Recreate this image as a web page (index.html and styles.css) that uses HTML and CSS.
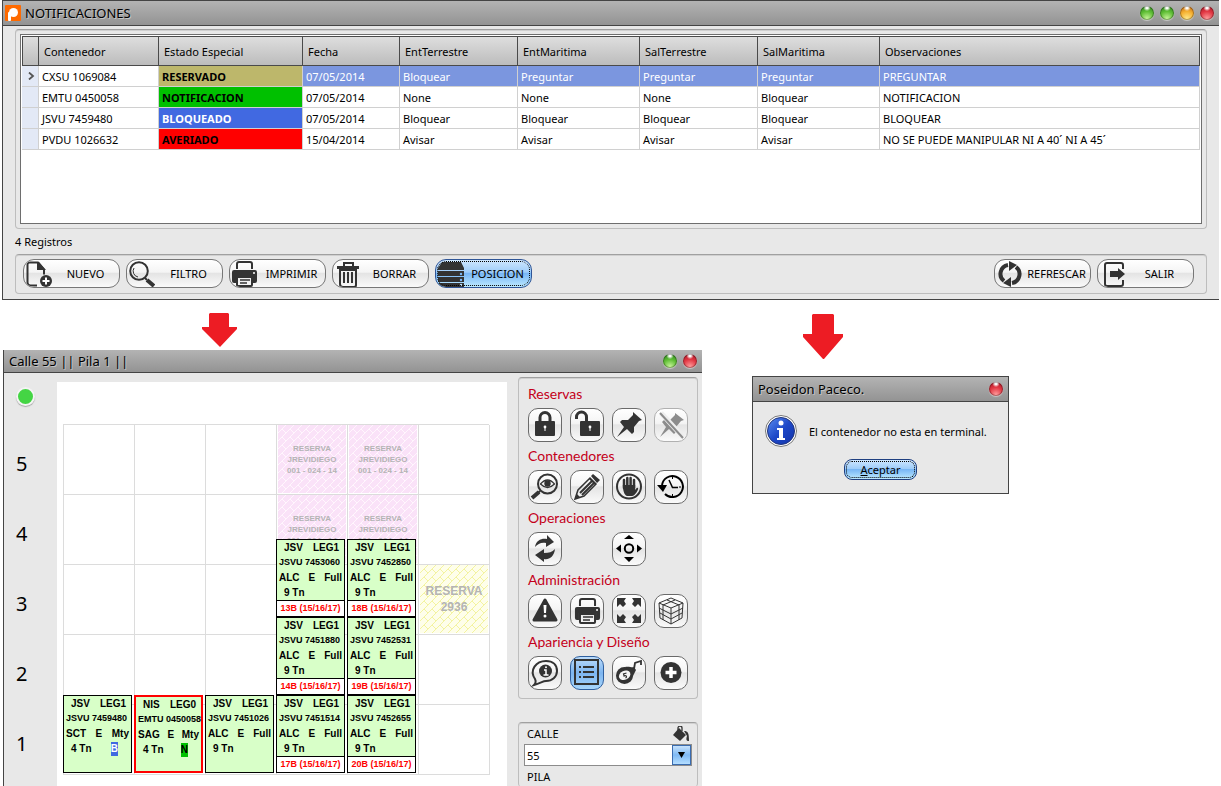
FILE: index.html
```
<!DOCTYPE html>
<html lang="es">
<head>
    <meta charset="UTF-8">
    <meta name="viewport" content="width=device-width, initial-scale=1.0">
    <title>Notificaciones</title>
    <link rel="stylesheet" href="styles.css">
</head>
<body>
    <!-- Icon set -->
    <svg class="hidden" aria-hidden="true">
        <symbol id="i-new" viewBox="0 0 28 28">
            <path d="M13 25.500H6.500a3 3 0 0 1-3-3v-18a2 2 0 0 1 2-2H14l6 7v5" fill="none" stroke="currentColor" stroke-width="2"/>
            <path d="M13 2h2l7 8h-9z"/>
            <circle cx="22" cy="21" r="6"/>
            <path d="M22 17.500v7M18.500 21h7" stroke="#fff" stroke-width="2"/>
        </symbol>
        <symbol id="i-search" viewBox="0 0 28 28">
            <circle cx="12" cy="11" r="8.800" fill="none" stroke="currentColor" stroke-width="2"/>
            <path d="M7 8a6 6 0 0 0 4 9" fill="none" stroke="currentColor" stroke-width="1"/>
            <path d="M18 18l2 2" stroke="currentColor" stroke-width="2"/>
            <path d="M20 20l7 6" stroke="currentColor" stroke-width="4"/>
        </symbol>
        <symbol id="i-print" viewBox="0 0 28 28">
            <path d="M7 9V4a2 2 0 0 1 2-2h11a2 2 0 0 1 2 2v5" fill="none" stroke="currentColor" stroke-width="2"/>
            <path d="M4 10h21a2 2 0 0 1 2 2v9a2 2 0 0 1-2 2h-2v-7H6v7H4a2 2 0 0 1-2-2v-9a2 2 0 0 1 2-2z"/>
            <path d="M7 17h15v8a1 1 0 0 1-1 1H8a1 1 0 0 1-1-1z" fill="none" stroke="currentColor" stroke-width="2"/>
            <path d="M10 20h10M10 23h7" stroke="currentColor" stroke-width="1.500"/>
            <circle cx="24" cy="13" r="1" fill="#fff"/>
        </symbol>
        <symbol id="i-trash" viewBox="0 0 28 28">
            <path d="M11 6V3h9v3" fill="none" stroke="currentColor" stroke-width="2"/>
            <path d="M4 6h22v3H4z"/>
            <path d="M7 10v14a3 3 0 0 0 3 3h11a2 2 0 0 0 2-2V10z" fill="none" stroke="currentColor" stroke-width="2"/>
            <path d="M11 12v11M15 12v11M19 12v11" stroke="currentColor" stroke-width="2"/>
        </symbol>
        <symbol id="i-stack" viewBox="0 0 28 28">
            <path d="M6 2h19l3 6v2H2V8zM2 11h26v5H2zM2 17h26v5H2zM2 23h26v4H4z"/>
            <circle cx="25" cy="14" r="1.200" fill="#7db8f5"/>
            <circle cx="25" cy="20" r="1.200" fill="#7db8f5"/>
            <circle cx="25" cy="25" r="1.200" fill="#bfe4ff"/>
        </symbol>
        <symbol id="i-refresh" viewBox="0 0 28 28">
            <path d="M9 21a9 9 0 0 1 4-16M21 7a9 9 0 0 1-4 16" fill="none" stroke="currentColor" stroke-width="4"/>
            <path d="M14 1l8 4-8 6zM16 27l-8-4 8-6z"/>
        </symbol>
        <symbol id="i-exit" viewBox="0 0 28 28">
            <path d="M25 9V5a2 2 0 0 0-2-2H9a2 2 0 0 0-2 2v19a2 2 0 0 0 2 2h14a2 2 0 0 0 2-2v-4" fill="none" stroke="currentColor" stroke-width="2"/>
            <path d="M12 11h8V8l7 6-7 6v-3h-8z"/>
        </symbol>

        <symbol id="i-lock" viewBox="0 0 32 32">
            <path d="M11 14V8.500a5 5 0 0 1 10 0V14" fill="none" stroke="currentColor" stroke-width="3"/>
            <rect x="6" y="12" width="20" height="15" rx="1"/>
            <circle cx="16" cy="18" r="1.400" fill="#fff"/>
            <path d="M16 18v4" stroke="#fff"/>
        </symbol>
        <symbol id="i-unlock" viewBox="0 0 32 32">
            <path d="M5.500 10V8a5 5 0 0 1 10 0v5" fill="none" stroke="currentColor" stroke-width="3"/>
            <rect x="9" y="12" width="20" height="15" rx="1"/>
            <circle cx="19" cy="18" r="1.400" fill="#fff"/>
            <path d="M19 18v4" stroke="#fff"/>
        </symbol>
        <symbol id="i-pin" viewBox="0 0 32 32">
            <path d="M20 3l9 8-3 1-5 6v5l-2 2-5-5L4 28l7-10-4-5 2-2h6l5-5z"/>
        </symbol>
        <symbol id="i-unpin" viewBox="0 0 32 32">
            <path d="M20 4l9 7-3 1-5 6v5l-2 2-5-5L5 28l6-10-4-5 2-2h6l5-5z"/>
            <path d="M6 4l22 24" stroke="#eee" stroke-width="5"/>
            <path d="M5 4l23 25" stroke="currentColor" stroke-width="2"/>
        </symbol>
        <symbol id="i-view" viewBox="0 0 32 32">
            <circle cx="18.500" cy="13" r="9.500" fill="none" stroke="currentColor" stroke-width="2"/>
            <path d="M11 20l-2 2" stroke="currentColor" stroke-width="2"/>
            <path d="M10 21l-7 6" stroke="currentColor" stroke-width="4"/>
            <path d="M11.500 13q7-8 14 0-7 7-14 0z" fill="none" stroke="currentColor" stroke-width="1.300"/>
            <circle cx="18.500" cy="12.500" r="3.200"/>
        </symbol>
        <symbol id="i-pencil" viewBox="0 0 32 32">
            <path d="M4 28l3-9L19 7l6 6-12 12z" fill="none" stroke="currentColor" stroke-width="1.500"/>
            <path d="M9 22L21 10M11 24L23 12" stroke="currentColor" stroke-width="2"/>
            <path d="M4 28l2-5 3 3zM20 5l2-2 7 6-3 3zM18 8l1-1 6 6-1 1z"/>
        </symbol>
        <symbol id="i-hand" viewBox="0 0 32 32">
            <circle cx="16" cy="15.500" r="12" fill="none" stroke="currentColor" stroke-width="2"/>
            <path d="M11 9v8M14.300 7v9M17.600 7v9M21 9v8" stroke="currentColor" stroke-width="2.500" stroke-linecap="round"/>
            <path d="M9.800 14h12.400l-.2 5c1-1 2-3 3-2s-3 8-6 8h-5c-3-1-4-6-4.200-11z"/>
        </symbol>
        <symbol id="i-history" viewBox="0 0 32 32">
            <path d="M7 14a10.500 10.500 0 1 1 3 9" fill="none" stroke="#000" stroke-width="2"/>
            <path d="M2 14h10l-4 7z" fill="#000"/>
            <path d="M14 9l3.500 7.500H23" fill="none" stroke="#000" stroke-width="1.500"/>
            <path d="M17.500 6v2M26 16h-2M17.500 25v-2" stroke="#000"/>
        </symbol>
        <symbol id="i-swap" viewBox="0 0 32 32">
            <path d="M6 14c1-7 7-9 12-8V2l7 7-8 5v-4c-5-1-8 1-11 4z"/>
            <path d="M26 16c-1 8-6 11-11 10v3l-9-7 9-6v4c5 0 8-1 11-4z"/>
        </symbol>
        <symbol id="i-move" viewBox="0 0 32 32">
            <circle cx="16" cy="15.500" r="4.200" fill="none" stroke="#000" stroke-width="2"/>
            <path d="M16 2l5 4H11zM16 29l5-5H11zM3 15.500l5-4v8zM29 15.500l-5-4v8z" fill="#000"/>
        </symbol>
        <symbol id="i-warn" viewBox="0 0 32 32">
            <path d="M16 5l11 20H5z" stroke="currentColor" stroke-width="3" stroke-linejoin="round"/>
            <path d="M14.500 10h3l-.5 8h-2z" fill="#fff"/>
            <circle cx="16" cy="21" r="1.500" fill="#fff"/>
        </symbol>
        <symbol id="i-expand" viewBox="0 0 32 32">
            <path d="M4 3h9l-2 3 2 3-3 3-3-3-3 3zM28 3v9l-3-3-3 3-3-3 2-3-2-3zM4 28v-9l3 3 3-3 3 3-2 3 2 3zM28 28h-9l2-3-2-3 3-3 3 3 3-3z"/>
        </symbol>
        <symbol id="i-cube" viewBox="0 0 32 32">
            <path d="M16 3l12 5-1 15-11 6-11-6L4 8zM4 8l12 5 12-5M16 13v16M12 5l12 5v15M20 5L8 10v15M4 13l12 6 12-6M5 18l11 6 11-6" fill="none" stroke="currentColor" stroke-width="1"/>
        </symbol>
        <symbol id="i-info" viewBox="0 0 32 32">
            <path d="M6 22C0 13 7 4 17 4c7 0 11 4 11 10s-5 10-11 10c-3 0-5 2-12 4 2-2 2-4 1-6z" fill="none" stroke="currentColor" stroke-width="2"/>
            <circle cx="16.500" cy="14" r="6.500"/>
            <path d="M15 13h2v5M14.500 18h5" stroke="#fff" fill="none" stroke-width="1.500"/>
            <circle cx="17" cy="10.300" r="1" fill="#fff"/>
        </symbol>
        <symbol id="i-list" viewBox="0 0 32 32">
            <rect x="4" y="3" width="23" height="24" fill="none" stroke="currentColor" stroke-width="2"/>
            <path d="M8 10h2M8 15h2M8 20h2M12 10h11M12 15h11M12 20h11" stroke="currentColor" stroke-width="2"/>
        </symbol>
        <symbol id="i-tape" viewBox="0 0 32 32">
            <circle cx="11.500" cy="18.500" r="8.500"/>
            <path d="M12 10c4-1 7 1 9 0l2 3-4 8z"/>
            <path d="M21 12l1-6 6-2v4" fill="none" stroke="currentColor" stroke-width="1.800"/>
            <ellipse cx="11.500" cy="18.500" rx="6" ry="4.500" fill="#f4f4f4" transform="rotate(-25 11 18)"/>
            <path d="M13.500 16l-3 1 .6 2c2-1.200 3.500.6 1.400 2" fill="none" stroke="currentColor" stroke-width="1.200"/>
        </symbol>
        <symbol id="i-add" viewBox="0 0 32 32">
            <circle cx="16" cy="15.500" r="10.500"/>
            <path d="M16 10v11M10.500 15.500h11" stroke="#fff" stroke-width="3.500"/>
        </symbol>
        <symbol id="i-bucket" viewBox="0 0 16 16">
            <path d="M6 2l7 7-6 6L0 9z"/>
            <path d="M5 8V2a2 2 0 0 1 4 0v3" fill="none" stroke="currentColor" stroke-width="1.300"/>
            <path d="M11 5c4 0 5 2 5 10-3 0-3-2-2-5z"/>
        </symbol>
    </svg>

    <section class="window main-window">
        <header class="titlebar">
            <svg class="app-icon" viewBox="0 0 16 16" aria-hidden="true">
                <rect width="16" height="16" rx="1" fill="#ff6a00"/>
                <circle cx="8.500" cy="7.500" r="4.500" fill="#fff"/>
                <rect x="3" y="7" width="3" height="9" rx="1" fill="#fff"/>
            </svg>
            <h1>NOTIFICACIONES</h1>
            <div class="orbs">
                <button class="orb orb-green" aria-label="Minimizar"></button>
                <button class="orb orb-green" aria-label="Restaurar"></button>
                <button class="orb orb-orange" aria-label="Maximizar"></button>
                <button class="orb orb-red" aria-label="Cerrar"></button>
            </div>
        </header>
        <div class="main-body">
            <div class="group">
                <div class="grid-box">
                    <table class="data-grid">
                        <colgroup>
                            <col class="c-mark"><col class="c-120"><col class="c-144"><col class="c-97"><col class="c-118"><col class="c-122"><col class="c-118"><col class="c-122"><col>
                        </colgroup>
                        <thead>
                            <tr>
                                <th></th>
                                <th>Contenedor</th>
                                <th>Estado Especial</th>
                                <th>Fecha</th>
                                <th>EntTerrestre</th>
                                <th>EntMaritima</th>
                                <th>SalTerrestre</th>
                                <th>SalMaritima</th>
                                <th>Observaciones</th>
                            </tr>
                        </thead>
                        <tbody>
                            <tr class="selected">
                                <td class="mark"><svg viewBox="0 0 8 8" aria-hidden="true"><path d="M2 0.500l4 3.500-4 3.500" fill="none" stroke="#555" stroke-width="1.800"/></svg></td>
                                <td class="plain">CXSU 1069084</td>
                                <td class="state reserved">RESERVADO</td>
                                <td>07/05/2014</td>
                                <td>Bloquear</td>
                                <td>Preguntar</td>
                                <td>Preguntar</td>
                                <td>Preguntar</td>
                                <td>PREGUNTAR</td>
                            </tr>
                            <tr>
                                <td class="mark"></td>
                                <td>EMTU 0450058</td>
                                <td class="state notified">NOTIFICACION</td>
                                <td>07/05/2014</td>
                                <td>None</td>
                                <td>None</td>
                                <td>None</td>
                                <td>Bloquear</td>
                                <td>NOTIFICACION</td>
                            </tr>
                            <tr>
                                <td class="mark"></td>
                                <td>JSVU 7459480</td>
                                <td class="state blocked">BLOQUEADO</td>
                                <td>07/05/2014</td>
                                <td>Bloquear</td>
                                <td>Bloquear</td>
                                <td>Bloquear</td>
                                <td>Bloquear</td>
                                <td>BLOQUEAR</td>
                            </tr>
                            <tr>
                                <td class="mark"></td>
                                <td>PVDU 1026632</td>
                                <td class="state damaged">AVERIADO</td>
                                <td>15/04/2014</td>
                                <td>Avisar</td>
                                <td>Avisar</td>
                                <td>Avisar</td>
                                <td>Avisar</td>
                                <td>NO SE PUEDE MANIPULAR NI A 40´ NI A 45´</td>
                            </tr>
                        </tbody>
                    </table>
                </div>
            </div>
            <p class="count">4 Registros</p>
            <div class="group toolbar">
                <button class="btn"><svg><use href="#i-new"/></svg><span>NUEVO</span></button>
                <button class="btn"><svg><use href="#i-search"/></svg><span>FILTRO</span></button>
                <button class="btn"><svg><use href="#i-print"/></svg><span>IMPRIMIR</span></button>
                <button class="btn"><svg><use href="#i-trash"/></svg><span>BORRAR</span></button>
                <button class="btn btn-active"><svg><use href="#i-stack"/></svg><span>POSICION</span></button>
                <button class="btn push-right"><svg><use href="#i-refresh"/></svg><span>REFRESCAR</span></button>
                <button class="btn"><svg><use href="#i-exit"/></svg><span>SALIR</span></button>
            </div>
        </div>
    </section>

    <div class="results">
        <div class="result-left">
            <svg class="arrow arrow-left" viewBox="0 0 35 34" aria-hidden="true"><path d="M8 0h18l1 1v13h8v2L18 34 0 16v-2h7V1z"/></svg>
            <section class="window stack-window">
                <header class="titlebar titlebar-plain">
                    <h2>Calle 55 || Pila 1 ||</h2>
                    <div class="orbs">
                        <button class="orb orb-green" aria-label="Minimizar"></button>
                        <button class="orb orb-red" aria-label="Cerrar"></button>
                    </div>
                </header>
                <div class="stack-body">
                    <div class="levels">
                        <span class="led"></span>
                        <ol>
                            <li>5</li>
                            <li>4</li>
                            <li>3</li>
                            <li>2</li>
                            <li>1</li>
                        </ol>
                    </div>

                    <div class="yard">
                        <div class="bay">
                            <div class="slots">
                                <div></div><div></div><div></div>
                                <div class="hold hold-pink">RESERVA<br>JREVIDIEGO<br>001 - 024 - 14</div>
                                <div class="hold hold-pink">RESERVA<br>JREVIDIEGO<br>001 - 024 - 14</div>
                                <div></div>
                                <div></div><div></div><div></div>
                                <div class="hold hold-pink">RESERVA<br>JREVIDIEGO<br>001 - 024 - 14</div>
                                <div class="hold hold-pink">RESERVA<br>JREVIDIEGO<br>001 - 024 - 14</div>
                                <div></div>
                                <div></div><div></div><div></div><div></div><div></div>
                                <div class="hold hold-yellow">RESERVA<br>2936</div>
                                <div></div><div></div><div></div><div></div><div></div><div></div>
                                <div></div><div></div><div></div><div></div><div></div><div></div>
                            </div>
                            <div class="piles">
                                <div class="pile">
                                    <article class="box">
                                        <p class="box-head"><span>JSV</span><span>LEG1</span></p>
                                        <p class="box-id">JSVU 7459480</p>
                                        <p class="box-info"><span>SCT</span><span>E</span><span>Mty</span></p>
                                        <p class="box-load"><span>4 Tn</span><mark class="tag-b">B</mark></p>
                                    </article>
                                </div>
                                <div class="pile">
                                    <article class="box box-selected">
                                        <p class="box-head"><span>NIS</span><span>LEG0</span></p>
                                        <p class="box-id">EMTU 0450058</p>
                                        <p class="box-info"><span>SAG</span><span>E</span><span>Mty</span></p>
                                        <p class="box-load"><span>4 Tn</span><mark class="tag-n">N</mark></p>
                                    </article>
                                </div>
                                <div class="pile">
                                    <article class="box">
                                        <p class="box-head"><span>JSV</span><span>LEG1</span></p>
                                        <p class="box-id">JSVU 7451026</p>
                                        <p class="box-info"><span>ALC</span><span>E</span><span>Full</span></p>
                                        <p class="box-load"><span>9 Tn</span></p>
                                    </article>
                                </div>
                                <div class="pile">
                                    <article class="box">
                                        <p class="box-head"><span>JSV</span><span>LEG1</span></p>
                                        <p class="box-id">JSVU 7453060</p>
                                        <p class="box-info"><span>ALC</span><span>E</span><span>Full</span></p>
                                        <p class="box-load"><span>9 Tn</span></p>
                                        <p class="box-foot">13B (15/16/17)</p>
                                    </article>
                                    <article class="box">
                                        <p class="box-head"><span>JSV</span><span>LEG1</span></p>
                                        <p class="box-id">JSVU 7451880</p>
                                        <p class="box-info"><span>ALC</span><span>E</span><span>Full</span></p>
                                        <p class="box-load"><span>9 Tn</span></p>
                                        <p class="box-foot">14B (15/16/17)</p>
                                    </article>
                                    <article class="box">
                                        <p class="box-head"><span>JSV</span><span>LEG1</span></p>
                                        <p class="box-id">JSVU 7451514</p>
                                        <p class="box-info"><span>ALC</span><span>E</span><span>Full</span></p>
                                        <p class="box-load"><span>9 Tn</span></p>
                                        <p class="box-foot">17B (15/16/17)</p>
                                    </article>
                                </div>
                                <div class="pile">
                                    <article class="box">
                                        <p class="box-head"><span>JSV</span><span>LEG1</span></p>
                                        <p class="box-id">JSVU 7452850</p>
                                        <p class="box-info"><span>ALC</span><span>E</span><span>Full</span></p>
                                        <p class="box-load"><span>9 Tn</span></p>
                                        <p class="box-foot">18B (15/16/17)</p>
                                    </article>
                                    <article class="box">
                                        <p class="box-head"><span>JSV</span><span>LEG1</span></p>
                                        <p class="box-id">JSVU 7452531</p>
                                        <p class="box-info"><span>ALC</span><span>E</span><span>Full</span></p>
                                        <p class="box-load"><span>9 Tn</span></p>
                                        <p class="box-foot">19B (15/16/17)</p>
                                    </article>
                                    <article class="box">
                                        <p class="box-head"><span>JSV</span><span>LEG1</span></p>
                                        <p class="box-id">JSVU 7452655</p>
                                        <p class="box-info"><span>ALC</span><span>E</span><span>Full</span></p>
                                        <p class="box-load"><span>9 Tn</span></p>
                                        <p class="box-foot">20B (15/16/17)</p>
                                    </article>
                                </div>
                            </div>
                        </div>
                    </div>

                    <aside class="side">
                        <div class="group tools">
                            <h3>Reservas</h3>
                            <div class="tool-row">
                                <button class="tool" aria-label="Reservar"><svg><use href="#i-lock"/></svg></button>
                                <button class="tool" aria-label="Liberar"><svg><use href="#i-unlock"/></svg></button>
                                <button class="tool" aria-label="Fijar"><svg><use href="#i-pin"/></svg></button>
                                <button class="tool" aria-label="Soltar" disabled><svg><use href="#i-unpin"/></svg></button>
                            </div>
                            <h3>Contenedores</h3>
                            <div class="tool-row">
                                <button class="tool" aria-label="Ver"><svg><use href="#i-view"/></svg></button>
                                <button class="tool" aria-label="Editar"><svg><use href="#i-pencil"/></svg></button>
                                <button class="tool" aria-label="Bloquear"><svg><use href="#i-hand"/></svg></button>
                                <button class="tool" aria-label="Historial"><svg><use href="#i-history"/></svg></button>
                            </div>
                            <h3>Operaciones</h3>
                            <div class="tool-row">
                                <button class="tool" aria-label="Intercambiar"><svg><use href="#i-swap"/></svg></button>
                                <span></span>
                                <button class="tool" aria-label="Mover"><svg><use href="#i-move"/></svg></button>
                            </div>
                            <h3>Administración</h3>
                            <div class="tool-row">
                                <button class="tool" aria-label="Avisos"><svg><use href="#i-warn"/></svg></button>
                                <button class="tool" aria-label="Imprimir"><svg viewBox="-2 -2 33 33"><use href="#i-print" width="29" height="29"/></svg></button>
                                <button class="tool" aria-label="Ampliar"><svg><use href="#i-expand"/></svg></button>
                                <button class="tool" aria-label="Vista 3D"><svg><use href="#i-cube"/></svg></button>
                            </div>
                            <h3>Apariencia y Diseño</h3>
                            <div class="tool-row">
                                <button class="tool" aria-label="Información"><svg><use href="#i-info"/></svg></button>
                                <button class="tool tool-active" aria-label="Lista"><svg><use href="#i-list"/></svg></button>
                                <button class="tool" aria-label="Medir"><svg><use href="#i-tape"/></svg></button>
                                <button class="tool" aria-label="Agregar"><svg><use href="#i-add"/></svg></button>
                            </div>
                        </div>
                        <div class="group place">
                            <div class="place-head">
                                <label for="calle">CALLE</label>
                                <svg><use href="#i-bucket"/></svg>
                            </div>
                            <div class="combo">
                                <select id="calle"><option>55</option></select>
                                <span class="combo-arrow"><svg viewBox="0 0 7 6" aria-hidden="true"><path d="M0 0h7L3.500 6z"/></svg></span>
                            </div>
                            <div class="place-head">PILA</div>
                        </div>
                    </aside>
                </div>
            </section>
        </div>

        <div class="result-right">
            <svg class="arrow arrow-right" viewBox="0 0 40 45" aria-hidden="true"><path d="M10 0h20l1 1v19h9v3L21 45h-1L0 23v-3h9V1z"/></svg>
            <section class="window dialog" role="dialog" aria-labelledby="dialog-title">
                <header class="titlebar">
                    <h2 id="dialog-title">Poseidon Paceco.</h2>
                    <div class="orbs"><button class="orb orb-red" aria-label="Cerrar"></button></div>
                </header>
                <div class="message">
                    <svg viewBox="0 0 32 32" aria-hidden="true">
                        <defs>
                            <linearGradient id="blue" x1="0" y1="0" x2="1" y2="1">
                                <stop offset="0" stop-color="#5a8cf0"/>
                                <stop offset="0.500" stop-color="#1d48c8"/>
                                <stop offset="1" stop-color="#1232a8"/>
                            </linearGradient>
                        </defs>
                        <circle cx="16" cy="16" r="15.500" fill="#fff" stroke="#777"/>
                        <circle cx="16" cy="16" r="13.500" fill="url(#blue)" stroke="#22357c"/>
                        <circle cx="16" cy="8" r="2.500" fill="#fff"/>
                        <path d="M12 13h6v10h2v2h-8v-2h2v-8h-2z" fill="#fff"/>
                    </svg>
                    <p>El contenedor no esta en terminal.</p>
                </div>
                <button class="accept"><span><u>A</u>ceptar</span></button>
            </section>
        </div>
    </div>
</body>
</html>
```
FILE: styles.css
```
:root {
    --face: #e8e8e8;
    --edge: #444;
    --groove: #bdbdbd;
    --ink: #333;
    --label: #c4001a;
    --arrow: #ed1c24;
    --row-selected: #7b96df;
    --box-green: #d8ffc8;
}

* {
    margin: 0;
    padding: 0;
    box-sizing: border-box;
}

body {
    display: flex;
    flex-direction: column;
    height: 100vh;
    overflow: hidden;
    padding: 0 2px;
    background: #fff;
    color: #000;
    font-family: "Noto Sans", "Open Sans", sans-serif;
    font-size: 11px;
}

button,
select {
    font: inherit;
    color: inherit;
}

.hidden {
    display: none;
}

/* Windows */
.window {
    background: var(--face);
    border: 1px solid var(--edge);
}

.titlebar {
    display: flex;
    align-items: center;
    gap: 4px;
    height: 25px;
    padding: 0 5px 0 2px;
    background: linear-gradient(#b3b3b3, #939393);
    border-bottom: 1px solid var(--edge);
}

.titlebar h1,
.titlebar h2 {
    font-size: 13px;
    font-weight: normal;
    line-height: 22px;
    text-shadow: 1px 1px 0 #c4c4c4;
}

.titlebar h2 {
    padding-left: 3px;
}

.titlebar-plain {
    height: 23px;
}

.app-icon {
    width: 16px;
    height: 16px;
}

.orbs {
    display: flex;
    gap: 6px;
    margin-left: auto;
}

.orb {
    width: 14px;
    height: 14px;
    border: none;
    border-radius: 50%;
    box-shadow: inset 0 0 0 1px rgba(0, 0, 0, 0.3), 0 1px 1px #c8c8c8;
}

.orb-green {
    background: radial-gradient(circle at 50% 10%, #fff 0 8%, transparent 26%), radial-gradient(circle at 50% 90%, #c8f59a, #5fbe35 50%, #257a1c);
}

.orb-orange {
    background: radial-gradient(circle at 50% 10%, #fff 0 8%, transparent 26%), radial-gradient(circle at 50% 90%, #ffe98a, #f5b030 50%, #b85a10);
}

.orb-red {
    background: radial-gradient(circle at 50% 10%, #fff 0 8%, transparent 26%), radial-gradient(circle at 50% 90%, #ff9c9c, #e23844 50%, #a01020);
}

.group {
    border: 1px solid var(--groove);
    border-top-color: #a0a0a0;
    border-radius: 4px;
    box-shadow: inset 0 1px 0 #d0d0d0;
}

/* Notifications window */
.main-window {
    border-right: none;
}

.main-body {
    padding: 3px 12px 5px;
}

.main-body > .group {
    padding: 4px;
}

.grid-box {
    height: 190px;
    padding: 1px;
    background: #fff;
    border: 1px solid #6e6e6e;
}

.data-grid {
    width: 100%;
    table-layout: fixed;
    border-collapse: separate;
    border-spacing: 0;
    white-space: nowrap;
}

.c-mark { width: 17px; }
.c-97 { width: 97px; }
.c-118 { width: 118px; }
.c-120 { width: 120px; }
.c-122 { width: 122px; }
.c-144 { width: 144px; }

.data-grid th {
    height: 30px;
    padding: 0 5px;
    text-align: left;
    font-weight: normal;
    background: linear-gradient(#dedede, #bcbcbc);
    border: solid #4a4a4a;
    border-width: 1px 1px 1px 0;
}

.data-grid th:first-child {
    border-left-width: 1px;
}

.data-grid td {
    height: 21px;
    padding: 0 3px;
    border: solid #d0d0d0;
    border-width: 0 1px 1px 0;
}

.selected td {
    background: var(--row-selected);
    color: #fff;
}

.data-grid .mark {
    padding: 0 5px;
    background: #e3e9f6;
}

.mark svg {
    display: block;
    width: 8px;
    height: 8px;
}

.selected .plain {
    background: #fff;
    color: #000;
}

.state {
    font-weight: bold;
}

.data-grid .reserved {
    background: #bdb76b;
    color: #000;
}

.notified {
    background: #00c000;
}

.blocked {
    background: #4169e1;
    color: #fff;
}

.damaged {
    background: #f00;
}

.count {
    line-height: 25px;
}

/* Buttons */
.main-body > .toolbar {
    display: flex;
    gap: 6px;
    padding: 4px 12px 5px 7px;
}

.btn {
    display: flex;
    align-items: center;
    width: 97px;
    height: 29px;
    background: linear-gradient(#fff, #f4f4f4 45%, #e4e4e4 50%, #fafafa);
    border: 1px solid #777;
    border-radius: 11px;
    overflow: hidden;
}

.btn svg {
    width: 28px;
    height: 28px;
    flex: none;
    color: var(--ink);
    fill: currentColor;
}

.btn span {
    flex: 1;
}

.btn-active {
    background: linear-gradient(#cfe6fd, #9fcdfa 45%, #78b6f5 50%, #bdeaff);
    border-color: #2f5596;
    outline: 1px dotted #000;
    outline-offset: -3px;
}

.push-right {
    margin-left: auto;
}

/* Lower part */
.results {
    display: flex;
    flex: 1;
    min-height: 0;
    padding-left: 1px;
}

.result-left {
    display: flex;
    flex-direction: column;
    flex: 0 1 699px;
}

.arrow {
    display: block;
    flex: none;
    fill: var(--arrow);
}

.arrow-left {
    width: 35px;
    height: 34px;
    margin: 13px 0 3px 199px;
}

.arrow-right {
    width: 40px;
    height: 45px;
    margin: 14px 0 17px 51px;
}

.result-right {
    padding-left: 50px;
}

/* Stack window */
.stack-window {
    display: flex;
    flex-direction: column;
    flex: 1;
    min-height: 0;
    border-width: 0 0 0 1px;
}

.stack-body {
    display: flex;
    flex: 1;
    min-height: 0;
}

.levels {
    width: 53px;
    padding-left: 12px;
}

.led {
    display: block;
    width: 19px;
    height: 19px;
    margin-top: 14px;
    background: #44d544;
    border: 2px solid #f4f4f4;
    border-radius: 50%;
    box-shadow: 0 1px 1px #aaa;
}

.levels ol {
    margin-top: 23px;
    list-style: none;
    font-size: 20px;
    line-height: 70px;
}

.yard {
    flex: 1;
    margin-top: 9px;
    padding: 42px 6px 0;
    background: #fff;
}

.bay {
    position: relative;
    width: 426px;
}

.slots {
    display: grid;
    grid-template-columns: repeat(6, 71px);
    grid-auto-rows: 70px;
    border-top: 1px solid #dcdcdc;
    border-left: 1px solid #dcdcdc;
}

.slots > div {
    border-right: 1px solid #dcdcdc;
    border-bottom: 1px solid #dcdcdc;
}

.hold,
.box {
    font-family: "Liberation Sans", sans-serif;
    font-weight: bold;
}

.hold {
    display: flex;
    align-items: center;
    justify-content: center;
    padding: 0 1px 1px;
    text-align: center;
    color: #b4b4b4;
}

.hold-pink {
    font-size: 8px;
    line-height: 11px;
    background: #fae2f8 url("data:image/svg+xml,%3Csvg xmlns='http://www.w3.org/2000/svg' width='8' height='8'%3E%3Cpath d='M0 8L8 0M4 4L8 8' stroke='%23fff6fd' fill='none'/%3E%3C/svg%3E") content-box;
}

.hold-yellow {
    font-size: 12px;
    line-height: 16px;
    background: #fefeea url("data:image/svg+xml,%3Csvg xmlns='http://www.w3.org/2000/svg' width='8' height='8'%3E%3Cpath d='M0 8L8 0M4 4L8 8' stroke='%23f3f3a0' fill='none'/%3E%3C/svg%3E") content-box;
}

/* Containers lie over the slots, piled from the ground up */
.piles {
    position: absolute;
    inset: 0 0 2px;
    display: grid;
    grid-template-columns: repeat(6, 71px);
    align-items: end;
}

.box {
    width: 69px;
    height: 78px;
    background: var(--box-green);
    border: 1px solid #000;
    font-size: 10px;
    line-height: 15px;
    white-space: nowrap;
}

.box-selected {
    border: 2px solid #f00;
}

.box p {
    display: flex;
    justify-content: space-between;
    padding: 0 2px;
}

.box .box-head {
    padding: 0 5px 0 7px;
}

.box .box-id {
    font-size: 9px;
}

.box .box-load {
    align-items: center;
    padding: 0 13px 0 7px;
}

.box mark {
    line-height: 14px;
    color: #000;
}

.box .tag-b {
    background: #4169e1;
    color: #fff;
}

.box .tag-n {
    background: #00c000;
}

.box .box-foot {
    justify-content: center;
    height: 16px;
    background: #fff;
    border-top: 1px solid #000;
    color: #f00;
    font-size: 9px;
}

/* Side tools */
.side {
    display: flex;
    flex-direction: column;
    width: 195px;
    padding: 4px 4px 0 11px;
}

.tools {
    padding: 2px 0 8px 9px;
}

.tools h3 {
    color: var(--label);
    font-family: Lato, sans-serif;
    font-size: 14px;
    font-weight: normal;
    line-height: 28px;
}

.tool-row {
    display: grid;
    grid-template-columns: repeat(4, 34px);
    gap: 8px;
}

.tool {
    height: 34px;
    background: linear-gradient(#fff, #f4f4f4 45%, #e4e4e4 50%, #fafafa);
    border: 1px solid #6a6a6a;
    border-radius: 10px;
}

.tool svg {
    display: block;
    width: 32px;
    height: 32px;
    color: var(--ink);
    fill: currentColor;
}

.tool:disabled {
    border-color: #b0b0b0;
}

.tool:disabled svg {
    color: #8c8c8c;
}

.tool-active {
    background: linear-gradient(#bcdcfb, #7db5f0 50%, #a8d6fb);
    border-color: #2f5f9e;
}

.place {
    flex: 1;
    margin-top: 23px;
    padding: 0 5px;
    border-bottom: none;
}

.place-head {
    display: flex;
    align-items: center;
    justify-content: space-between;
    height: 21px;
    padding: 0 3px;
}

.place-head svg {
    width: 16px;
    height: 16px;
    fill: var(--ink);
    color: var(--ink);
}

.combo {
    display: flex;
    height: 22px;
    background: #fff;
    border: 1px solid #8c8c8c;
}

.combo select {
    flex: 1;
    padding: 0 2px;
    appearance: none;
    background: none;
    border: none;
}

.combo-arrow {
    display: flex;
    align-items: center;
    justify-content: center;
    width: 19px;
    background: linear-gradient(#c6e2fc, #7fb9f4 50%, #b4deff);
    border: 1px solid #3a6cb0;
}

.combo-arrow svg {
    width: 7px;
    height: 6px;
}

/* Message dialog */
.dialog {
    width: 257px;
    padding-bottom: 13px;
}

.message {
    display: flex;
    align-items: center;
    gap: 12px;
    padding: 13px 12px 12px;
}

.message svg {
    width: 32px;
    height: 32px;
    flex: none;
}

.accept {
    display: block;
    width: 73px;
    height: 21px;
    margin: 0 auto;
    background: linear-gradient(#cfe6fd, #9fcdfa 45%, #78b6f5 50%, #bdeaff);
    border: 1px solid #1f3f80;
    border-radius: 8px;
    outline: 1px dotted #000;
    outline-offset: -3px;
}
```
